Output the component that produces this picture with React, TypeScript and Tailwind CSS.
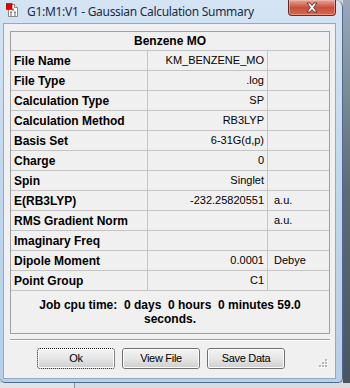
const rows: [string, string, string][] = [
  ["File Name", "KM_BENZENE_MO", ""],
  ["File Type", ".log", ""],
  ["Calculation Type", "SP", ""],
  ["Calculation Method", "RB3LYP", ""],
  ["Basis Set", "6-31G(d,p)", ""],
  ["Charge", "0", ""],
  ["Spin", "Singlet", ""],
  ["E(RB3LYP)", "-232.25820551", "a.u."],
  ["RMS Gradient Norm", "", "a.u."],
  ["Imaginary Freq", "", ""],
  ["Dipole Moment", "0.0001", "Debye"],
  ["Point Group", "C1", ""],
]

function AppIcon() {
  return (
    <svg width="13" height="15" viewBox="0 0 13 15">
      <path d="M2.5 1.5h6l3 3v9h-9z" fill="#fff" stroke="#8a8a8a" />
      <path d="M8.5 1.5v3h3" fill="#e8e8e8" stroke="#8a8a8a" />
      <circle cx="7" cy="6.5" r="1.1" fill="#777" />
      <circle cx="5" cy="9.5" r="1.1" fill="#777" />
      <circle cx="9" cy="9.5" r="1.1" fill="#777" />
      <circle cx="5" cy="12" r="0.9" fill="#999" />
      <circle cx="9" cy="12" r="0.9" fill="#999" />
      <path d="M7 6.5L5 9.5M7 6.5L9 9.5M5 9.5V12M9 9.5V12" stroke="#999" strokeWidth="0.6" />
      <rect x="0" y="0.5" width="6" height="6" fill="#e00000" stroke="#900" strokeWidth="0.6" />
    </svg>
  )
}

function CloseButton() {
  return (
    <div className="w-[48px] h-[16px] rounded-b-[4px] border border-t-0 border-[#6e2a20] bg-gradient-to-b from-[#e7a597] via-[#c84f3d] to-[#d46a4e] flex items-center justify-center shadow-[inset_0_0_0_1px_rgba(255,200,190,0.45)]">
      <svg width="14" height="11" viewBox="0 0 14 11">
        <path
          d="M2 1h3l2 2.5L9 1h3L8.6 5.5 12 10H9L7 7.5 5 10H2l3.4-4.5z"
          fill="#fff"
          stroke="#4a3030"
          strokeWidth="0.9"
          strokeLinejoin="round"
        />
      </svg>
    </div>
  )
}

function WinButton({ label, focused }: { label: string; focused?: boolean }) {
  return (
    <div
      className={
        focused
          ? "w-[78px] h-[21px] rounded-[3px] border border-dotted border-[#1a1a1a] flex"
          : "w-[78px] h-[21px] rounded-[3px] border border-[#707070] flex"
      }
    >
      <div className="flex-1 rounded-[2px] border border-[#fcfcfc] bg-gradient-to-b from-[#f2f2f2] via-[#e6e6e6] to-[#d0d0d0] flex items-center justify-center text-[11px] tracking-[-0.3px] text-black">
        {label}
      </div>
    </div>
  )
}

function Grip() {
  return (
    <svg width="10" height="10" viewBox="0 0 10 10">
      {[
        [7, 1],
        [4, 4],
        [7, 4],
        [1, 7],
        [4, 7],
        [7, 7],
      ].map(([x, y], i) => (
        <g key={i}>
          <rect x={x + 1} y={y + 1} width="2" height="2" fill="#fff" />
          <rect x={x} y={y} width="2" height="2" fill="#b8b8b8" />
        </g>
      ))}
    </svg>
  )
}

export default function App() {
  return (
    <div className="w-[350px] h-[388px] flex flex-col bg-[#d4d6d9] font-['Liberation_Sans',Arial,sans-serif] overflow-hidden">
      <div className="flex h-[383px]">
        <div className="w-[343px] h-[383px] rounded-tr-[7px] rounded-b-[5px] border-r border-b border-[#4f6a8c] bg-gradient-to-b from-[#d5e4f4] via-[#c0d6ee] to-[#b7cfe9] flex flex-col">
          <div className="h-[23px] flex items-start shrink-0">
            <div className="ml-[6px] mt-[3px]">
              <AppIcon />
            </div>
            <div className="ml-[8px] mt-[4px] text-[12px] leading-[16px] tracking-[-0.3px] text-[#1b2b45] font-['Noto_Sans',sans-serif] whitespace-nowrap">
              G1:M1:V1 - Gaussian Calculation Summary
            </div>
            <div className="ml-auto mr-[6px]">
              <CloseButton />
            </div>
          </div>
          <div className="ml-[3px] mr-[6px] h-[356px] border border-[#8fa9c7] bg-[#f0f0f0] flex flex-col">
            <div className="ml-[6px] mt-[7px] w-[320px] h-[303px] border border-[#a0a0a0] flex flex-col">
              <div className="h-[19px] border-b border-[#c4c4c4] flex items-center justify-center text-[12px] font-bold text-black">
                Benzene MO
              </div>
              {rows.map(([label, value, unit]) => (
                <div key={label} className="h-[20px] border-b border-[#c4c4c4] flex">
                  <div className="w-[137px] border-r border-[#c4c4c4] pl-[3px] flex items-center text-[12px] font-bold text-black">
                    {label}
                  </div>
                  <div className="w-[120px] border-r border-[#c4c4c4] pr-[3px] flex items-center justify-end text-[11px] text-black">
                    {value}
                  </div>
                  <div className="flex-1 pl-[6px] flex items-center text-[11px] text-black">{unit}</div>
                </div>
              ))}
              <div className="flex-1 pt-[7px] text-center text-[12px] leading-[14px] font-bold text-black whitespace-pre-wrap">
                {"Job cpu time:  0 days  0 hours  0 minutes 59.0\nseconds."}
              </div>
            </div>
            <div className="ml-[6px] mt-[5px] w-[320px] border-t border-[#a0a0a0] border-b border-b-white" />
            <div className="flex items-start mt-[7px]">
              <div className="ml-[33px] flex gap-[7px]">
                <WinButton label="Ok" focused />
                <WinButton label="View File" />
                <WinButton label="Save Data" />
              </div>
              <div className="ml-auto mr-[7px] mt-[10px]">
                <Grip />
              </div>
            </div>
          </div>
        </div>
        <div className="flex-1 bg-gradient-to-b from-[#9aa9b8] via-[#5d6a78] to-[#4b5562]" />
      </div>
      <div className="flex-1 flex">
        <div className="w-[75px] border-r border-[#8a8f96] bg-[#e2e3e5]" />
        <div className="flex-1 bg-[#d9dbde]" />
      </div>
    </div>
  )
}
